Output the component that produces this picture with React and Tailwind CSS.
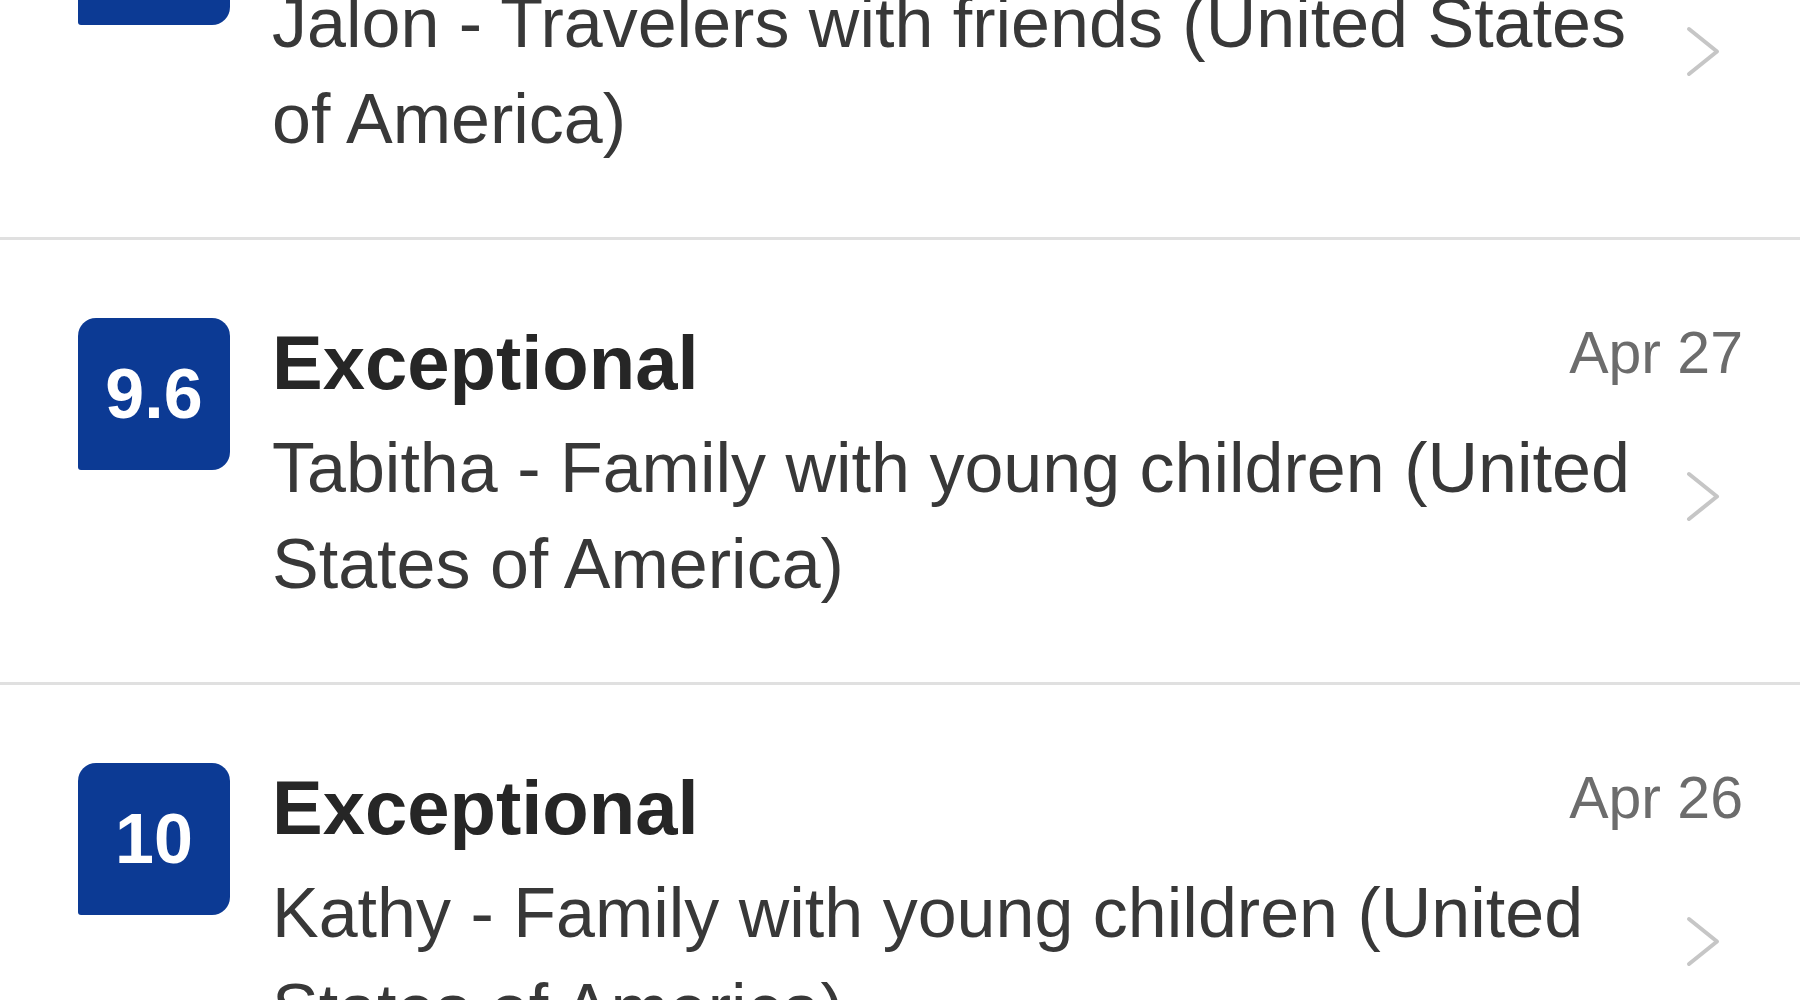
import React from "react";

const reviews = [
  {
    score: "10",
    title: "Exceptional",
    date: "Apr 28",
    text: "Jalon - Travelers with friends (United States of America)",
  },
  {
    score: "9.6",
    title: "Exceptional",
    date: "Apr 27",
    text: "Tabitha - Family with young children (United States of America)",
  },
  {
    score: "10",
    title: "Exceptional",
    date: "Apr 26",
    text: "Kathy - Family with young children (United States of America)",
  },
];

function Chevron() {
  return (
    <svg
      width="37"
      height="53"
      viewBox="0 0 37 53"
      fill="none"
      className="mt-[50px] mr-[21px] shrink-0"
    >
      <path
        d="M4 4 L32 26.5 L4 49"
        stroke="#c6c6c6"
        strokeWidth="4"
        strokeLinecap="round"
        strokeLinejoin="round"
      />
    </svg>
  );
}

function ReviewRow({ review }) {
  return (
    <div>
      <div className="flex items-start pt-[78px] pb-[70px] pl-[78px] pr-[57px]">
        <div className="flex h-[152px] w-[152px] shrink-0 items-center justify-center rounded-[18px] rounded-bl-[3px] bg-[#0c3a94] text-[70px] font-bold text-white">
          {review.score}
        </div>
        <div className="ml-[42px] flex min-w-0 flex-1 flex-col">
          <div className="flex items-start justify-between">
            <span className="text-[76px] leading-[90px] font-bold text-[#262626]">
              {review.title}
            </span>
            <span className="text-[59px] leading-[71px] text-[#6c6c6c]">
              {review.date}
            </span>
          </div>
          <div className="mt-[12px] flex items-start gap-[25px]">
            <p className="min-w-0 flex-1 text-[70px] leading-[96px] text-[#383838]">
              {review.text}
            </p>
            <Chevron />
          </div>
        </div>
      </div>
      <div className="h-[3px] bg-[#e0e0e0]" />
    </div>
  );
}

export default function App() {
  return (
    <div
      className="h-[1000px] w-[1800px] overflow-hidden bg-white"
      style={{ fontFamily: '"Liberation Sans", Arial, sans-serif' }}
    >
      <div className="-mt-[205px]">
        {reviews.map((review, i) => (
          <ReviewRow key={i} review={review} />
        ))}
      </div>
    </div>
  );
}
